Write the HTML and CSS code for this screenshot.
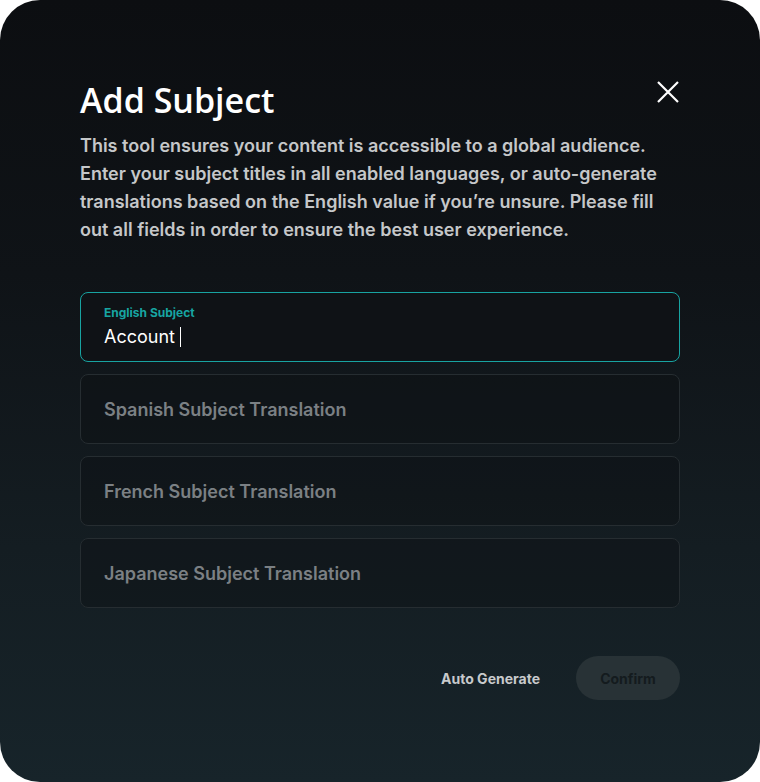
FILE: index.html
```html
<!DOCTYPE html>
<html>
<head>
<meta charset="utf-8">
<link rel="stylesheet" href="styles.css">
</head>
<body>
<div class="modal">
  <button class="close" aria-label="Close">
    <svg width="24" height="24" viewBox="0 0 24 24"><path d="M2 2 L22 22 M22 2 L2 22" stroke="#fff" stroke-width="2.2" fill="none"/></svg>
  </button>
  <h1 class="title">Add Subject</h1>
  <p class="desc">This tool ensures your content is accessible to a global audience. Enter your subject titles in all enabled languages, or auto-generate translations based on the English value if you’re unsure. Please fill out all fields in order to ensure the best user experience.</p>
  <div class="fields">
    <div class="field active">
      <span class="label">English Subject</span>
      <span class="value">Account <span class="caret"></span></span>
    </div>
    <div class="field"><span class="placeholder">Spanish Subject Translation</span></div>
    <div class="field"><span class="placeholder">French Subject Translation</span></div>
    <div class="field"><span class="placeholder">Japanese Subject Translation</span></div>
  </div>
  <div class="actions">
    <button class="btn-text">Auto Generate</button>
    <button class="btn-confirm">Confirm</button>
  </div>
</div>
</body>
</html>
```
FILE: styles.css
```css
html, body { margin: 0; padding: 0; background: #fff; }
body { width: 760px; height: 782px; font-family: Inter, "Noto Sans", sans-serif; }
.modal {
  position: relative;
  box-sizing: border-box;
  width: 760px;
  height: 782px;
  border-radius: 40px;
  background: linear-gradient(180deg, #0c0e11 0%, #0f1317 35%, #141d22 70%, #17242a 100%);
  padding: 76px 80px 0 80px;
  overflow: hidden;
}
.close {
  position: absolute;
  top: 80px;
  left: 656px;
  width: 24px;
  height: 24px;
  padding: 0;
  border: 0;
  background: none;
}
.close svg { display: block; }
.title {
  margin: 0;
  font-family: "Open Sans", Inter, sans-serif;
  font-weight: 600;
  font-size: 34px;
  line-height: 48px;
  color: #fff;
  letter-spacing: 0;
}
.desc {
  margin: 8px 0 0 0;
  font-size: 18px;
  font-weight: 600;
  line-height: 28px;
  color: #c5c7c9;
  letter-spacing: 0;
}
.fields {
  margin-top: 48px;
  display: flex;
  flex-direction: column;
  gap: 12px;
}
.field {
  box-sizing: border-box;
  height: 70px;
  border: 1px solid #262d31;
  border-radius: 8px;
  background: rgba(12,15,18,0.35);
  padding: 0 23px;
  display: flex;
  flex-direction: column;
  justify-content: center;
}
.field.active { border-color: #18a3a1; background: #0f1216; padding-top: 1px; }
.label { font-size: 12px; font-weight: 700; color: #17a5a2; line-height: 16px; }
.value { font-size: 18px; color: #fff; line-height: 26px; margin-top: 3px; display: flex; align-items: center; gap: 5px; }
.caret { display: inline-block; width: 1.5px; height: 20px; background: #fff; }
.placeholder { font-size: 18px; font-weight: 600; color: #7b8084; }
.actions {
  margin-top: 48px;
  display: flex;
  justify-content: flex-end;
  align-items: center;
  gap: 36px;
}
.btn-text {
  border: 0; background: none; padding: 0;
  font-family: Inter, sans-serif;
  font-size: 14px; font-weight: 700; color: #c8cacc;
}
.btn-confirm {
  border: 0;
  width: 104px; height: 44px;
  border-radius: 22px;
  background: #283236;
  font-family: Inter, sans-serif;
  font-size: 14px; font-weight: 700; color: #141b1e;
}
```
